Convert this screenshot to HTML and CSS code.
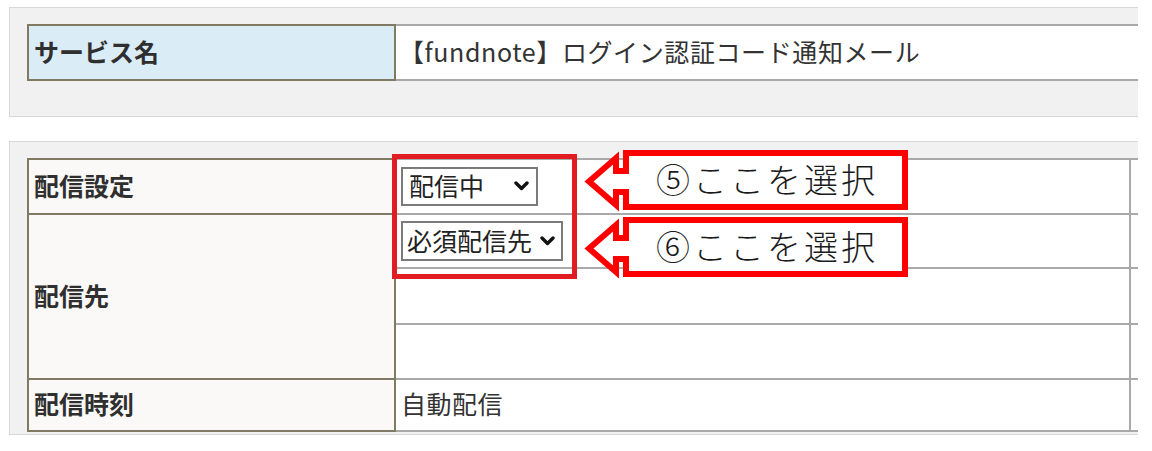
FILE: index.html
```html
<!DOCTYPE html>
<html lang="ja">
<head>
<meta charset="utf-8">
<title>配信設定</title>
<link rel="stylesheet" href="styles.css">
</head>
<body>
<div class="page">
  <section class="panel panel-service">
    <div class="grid grid-service">
      <div class="label label-blue">サービス名</div>
      <div class="value">【fundnote】ログイン認証コード通知メール</div>
    </div>
  </section>

  <section class="panel panel-settings">
    <div class="grid grid-settings">
      <div class="label row-1">配信設定</div>
      <div class="value row-1">
        <div class="select select-status"><span>配信中</span><svg class="chev" viewBox="0 0 15 10" width="15" height="10"><polyline points="2,2 7.5,7.5 13,2"/></svg></div>
      </div>
      <div class="extra row-1"></div>

      <div class="label row-span">配信先</div>
      <div class="value row-2">
        <div class="select select-target"><span>必須配信先</span><svg class="chev" viewBox="0 0 15 10" width="15" height="10"><polyline points="2,2 7.5,7.5 13,2"/></svg></div>
      </div>
      <div class="extra row-2"></div>
      <div class="value row-3"></div>
      <div class="extra row-3"></div>
      <div class="value row-4"></div>
      <div class="extra row-4"></div>

      <div class="label label-last row-5">配信時刻</div>
      <div class="value value-last row-5">自動配信</div>
      <div class="extra value-last row-5"></div>
    </div>
  </section>
</div>

<div class="highlight"></div>

<div class="callout callout-5">
  <svg class="callout-shape" viewBox="0 0 332 66" width="332" height="66"><path d="M46,6 H325 V60 H46 V45 H36 V58 L9,34.5 L36,11 V24 H46 Z"/></svg>
  <span class="callout-text">⑤ここを選択</span>
</div>
<div class="callout callout-6">
  <svg class="callout-shape" viewBox="0 0 332 66" width="332" height="66"><path d="M46,6 H325 V60 H46 V45 H36 V58 L9,34.5 L36,11 V24 H46 Z"/></svg>
  <span class="callout-text">⑥ここを選択</span>
</div>
</body>
</html>
```

FILE: styles.css
```css
html, body {
  margin: 0;
  padding: 0;
  background: #ffffff;
}

body {
  font-family: "Noto Sans CJK JP", "Noto Sans", sans-serif;
  color: #333333;
  height: 451px;
  overflow: hidden;
  position: relative;
}

.page {
  width: 1138px;
  overflow: hidden;
  padding-top: 7px;
}

.panel {
  margin-left: 9px;
  width: 1200px;
  background: #f1f1f1;
  border: 1px solid #d7d7d7;
  box-sizing: border-box;
}

.panel-service {
  padding: 16px 0 35px 17px;
}

.panel-settings {
  margin-top: 24px;
  padding: 16px 0 2px 17px;
}

.grid {
  display: grid;
}

.grid-service {
  grid-template-columns: 369px 800px;
  grid-template-rows: 57px;
}

.grid-settings {
  grid-template-columns: 369px 735px 80px;
  grid-template-rows: 55px 54px 56px 55px 54px;
}

.label,
.value,
.extra {
  box-sizing: border-box;
  display: flex;
  align-items: center;
  font-size: 25px;
  line-height: 1;
  padding-bottom: 3px;
}

.label {
  font-weight: bold;
  padding-left: 5px;
  background: #faf9f7;
  border: 2px solid #817a62;
  border-bottom: none;
  color: #2f2f2f;
}

.label-blue {
  background: #daedf7;
  border-bottom: 2px solid #817a62;
}

.label-last {
  border-bottom: 2px solid #817a62;
}

.value {
  background: #ffffff;
  border-top: 2px solid #a9a9a9;
  padding-left: 6px;
  color: #333333;
  letter-spacing: 0.5px;
}

.grid-service .value {
  border-bottom: 2px solid #a9a9a9;
  padding-left: 3px;
  letter-spacing: 0.6px;
}

.grid-settings .value {
  border-right: 2px solid #a9a9a9;
  padding-left: 5px;
}

.grid-settings .row-1,
.grid-settings .row-2 {
  padding-bottom: 0;
}

.extra {
  background: #ffffff;
  border-top: 2px solid #a9a9a9;
}

.value-last {
  border-bottom: 2px solid #a9a9a9;
  padding-left: 6px;
}

.row-1 { grid-row: 1; }
.row-2 { grid-row: 2; }
.row-3 { grid-row: 3; }
.row-4 { grid-row: 4; }
.row-5 { grid-row: 5; }
.row-span { grid-row: 2 / 5; }

.grid-settings .label.row-1 {
  padding-bottom: 3px;
}

.select {
  box-sizing: border-box;
  display: flex;
  align-items: center;
  justify-content: space-between;
  height: 39px;
  border: 2px solid #7b7b7b;
  background: #ffffff;
  padding: 0 7px 2px 6px;
  font-size: 25px;
  letter-spacing: 0;
  color: #222222;
}

.select .chev {
  margin-top: 2px;
}

.select-status {
  width: 137px;
  margin-top: -1px;
}

.select-target {
  width: 162px;
  height: 40px;
  padding-left: 4px;
  padding-right: 6px;
}

.chev {
  display: block;
  flex: none;
}

.chev polyline {
  fill: none;
  stroke: #111111;
  stroke-width: 3.4;
  stroke-linecap: round;
  stroke-linejoin: round;
}

.highlight {
  position: absolute;
  left: 392px;
  top: 154px;
  width: 185px;
  height: 125px;
  box-sizing: border-box;
  border: 5px solid #e21c23;
}

.callout {
  position: absolute;
  left: 580px;
  width: 332px;
  height: 66px;
  box-sizing: border-box;
  padding: 0 7px 2px 46px;
  display: flex;
  align-items: center;
  justify-content: center;
}

.callout-5 { top: 147px; }
.callout-6 { top: 214px; }

.callout-shape {
  position: absolute;
  left: 0;
  top: 0;
}

.callout-shape path {
  fill: #ffffff;
  stroke: #ff0000;
  stroke-width: 6;
  stroke-linejoin: miter;
}

.callout-text {
  position: relative;
  font-family: "Noto Sans CJK JP", "Noto Sans", sans-serif;
  font-weight: 300;
  font-size: 34px;
  letter-spacing: 3px;
  margin-right: -3px;
  color: #1a1a1a;
  line-height: 1;
}
```
